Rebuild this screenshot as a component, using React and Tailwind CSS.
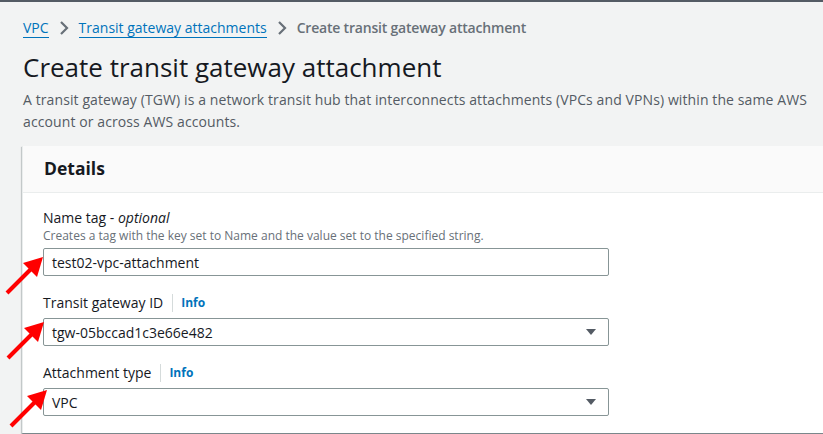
import React from "react";

const Arrow = ({ className }) => (
  <svg className={className} width="40" height="40" viewBox="0 0 40 40">
    <line x1="2" y1="38" x2="26" y2="14" stroke="#ff0000" strokeWidth="4" strokeLinecap="butt" />
    <polygon points="38,2 32,22 18,8" fill="#ff0000" />
  </svg>
);

const Caret = () => (
  <svg width="12" height="8" viewBox="0 0 12 8">
    <polygon points="1,1 11,1 6,7" fill="#545b64" />
  </svg>
);

const Chevron = () => (
  <span className="mx-[10px]">
    <svg width="10" height="14" viewBox="0 0 10 14">
      <polyline points="2,1 8,7 2,13" fill="none" stroke="#687078" strokeWidth="2.2" />
    </svg>
  </span>
);

const Label = ({ children, info }) => (
  <div className="flex items-center text-[14px] leading-[20px] text-[#16191f]">
    <span>{children}</span>
    {info && (
      <>
        <span className="ml-[9px] mr-[8px] h-[18px] w-px bg-[#d5dbdb]" />
        <span className="text-[12px] font-bold text-[#0073bb]">Info</span>
      </>
    )}
  </div>
);

export default function App() {
  return (
    <div
      className="relative h-[434px] w-[823px] overflow-hidden border-t-2 border-[#545b64] bg-[#f2f3f3]"
      style={{ fontFamily: '"Open Sans", "Noto Sans", sans-serif' }}
    >
      <div className="pl-[23px]">
        <div className="flex items-center pt-[16px] text-[14px] leading-[20px]">
          <span className="border-b border-[#0073bb] leading-[18px] text-[#0073bb]">VPC</span>
          <Chevron />
          <span className="border-b border-[#0073bb] leading-[18px] text-[#0073bb]">Transit gateway attachments</span>
          <Chevron />
          <span className="font-semibold tracking-[-0.2px] text-[#687078]">Create transit gateway attachment</span>
        </div>
        <h1 className="mt-[13px] text-[26px] leading-[32px] text-[#16191f]">Create transit gateway attachment</h1>
        <p className="mt-[6px] w-[800px] text-[14px] leading-[22px] tracking-[0.1px] text-[#545b64]">
          A transit gateway (TGW) is a network transit hub that interconnects attachments (VPCs and VPNs) within the same AWS account or across AWS accounts.
        </p>
      </div>

      <div className="ml-[22px] mt-[13px] w-[820px] border-l border-[#eaeded] bg-white shadow-[0_1px_1px_0_rgba(0,28,36,0.3),1px_1px_1px_0_rgba(0,28,36,0.15),-1px_1px_1px_0_rgba(0,28,36,0.15)]">
        <div className="h-[47px] border-b border-[#eaeded] bg-[#fafafa] pl-[21px] pt-[10px] text-[17.5px] font-bold leading-[24px] text-[#16191f]">
          Details
        </div>
        <div className="flex flex-col pb-[17px] pl-[20px] pt-[15px]">
          <Label>
            Name tag - <i>optional</i>
          </Label>
          <div className="text-[12px] leading-[16px] text-[#687078]">
            Creates a tag with the key set to Name and the value set to the specified string.
          </div>
          <div className="mt-[4px] flex h-[28px] w-[566px] items-center rounded-[2px] border border-[#879596] pl-[8px] text-[14px] text-[#16191f]">
            test02-vpc-attachment
          </div>

          <div className="mt-[17px]">
            <Label info>Transit gateway ID</Label>
          </div>
          <div className="mt-[5px] flex h-[28px] w-[566px] items-center justify-between rounded-[2px] border border-[#879596] pl-[8px] pr-[11px] text-[14px] text-[#16191f]">
            <span>tgw-05bccad1c3e66e482</span>
            <Caret />
          </div>

          <div className="mt-[17px]">
            <Label info>Attachment type</Label>
          </div>
          <div className="mt-[5px] flex h-[28px] w-[566px] items-center justify-between rounded-[2px] border border-[#879596] pl-[8px] pr-[11px] text-[14px] text-[#16191f]">
            <span>VPC</span>
            <Caret />
          </div>
        </div>
      </div>

      <Arrow className="absolute left-[5px] top-[253px]" />
      <Arrow className="absolute left-[6px] top-[318px]" />
      <Arrow className="absolute left-[9px] top-[386px]" />
    </div>
  );
}
